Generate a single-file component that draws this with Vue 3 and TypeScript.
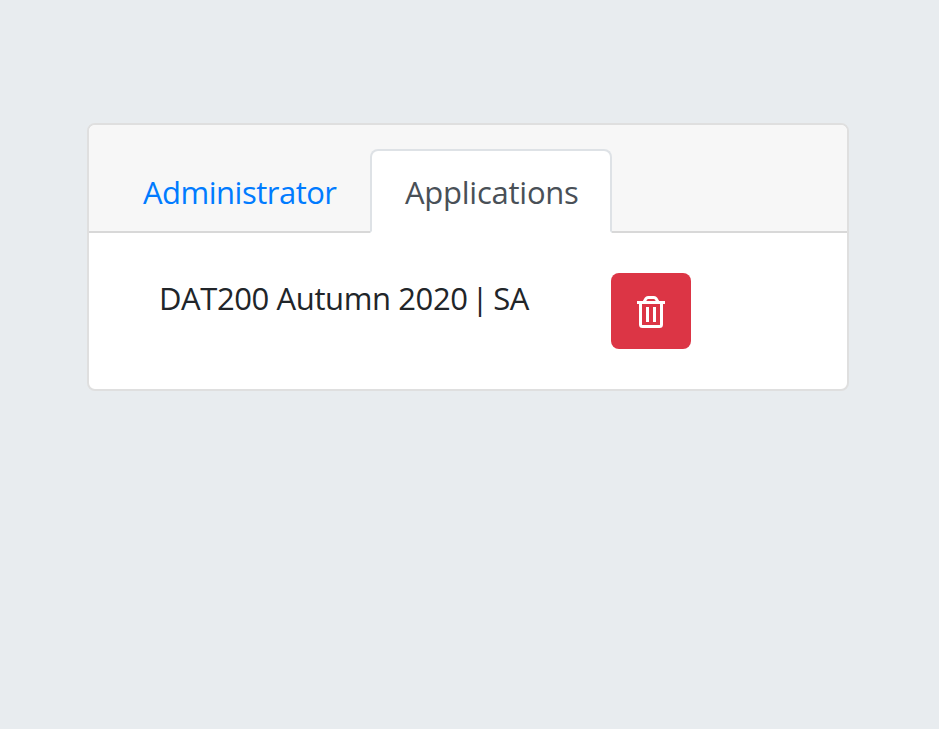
<script setup lang="ts">
import { ref } from 'vue'

type Tab = 'Administrator' | 'Applications'

interface Application {
  title: string
  code: string
}

const tabs: Tab[] = ['Administrator', 'Applications']
const active = ref<Tab>('Applications')
const applications: Application[] = [{ title: 'DAT200 Autumn 2020', code: 'SA' }]
</script>

<template>
  <main class="page">
    <section class="card">
      <header class="card-header">
        <nav class="tabs">
          <a
            v-for="tab in tabs"
            :key="tab"
            class="tab"
            :class="[tab.toLowerCase(), { active: tab === active }]"
            @click="active = tab"
          >{{ tab }}</a>
        </nav>
      </header>
      <div class="card-body">
        <div v-for="app in applications" :key="app.title" class="row">
          <div class="name">
            <span>{{ app.title }}</span>
            <span>|</span>
            <span class="code">{{ app.code }}</span>
          </div>
          <button class="delete" type="button" aria-label="Delete">
            <svg width="28" height="32" viewBox="0 0 28 32" fill="none" stroke="#fff" stroke-width="3">
              <path d="M0 6.5h28" />
              <path d="M7 6L9 2.6Q9.7 1.5 11 1.5H17Q18.3 1.5 19 2.6L21 6" />
              <path d="M3.5 7V28.5Q3.5 30.5 5.5 30.5H22.5Q24.5 30.5 24.5 28.5V7" />
              <path d="M10.5 11V26M17.5 11V26" />
            </svg>
          </button>
        </div>
      </div>
    </section>
  </main>
</template>

<style>
body {
  background: #e8ecef;
}
</style>

<style scoped>
.page {
  box-sizing: border-box;
  min-height: 729px;
  padding: 123px 90px 0 87px;
  font-family: "Open Sans", "Noto Sans", sans-serif;
  font-size: 31px;
  line-height: 48px;
  color: #212529;
}
.card {
  box-sizing: border-box;
  height: 268px;
  border: 2px solid #dfdfdf;
  border-radius: 8px;
  background: #fff;
}
.card-header {
  box-sizing: border-box;
  height: 108px;
  padding: 24px 20px 0;
  border-bottom: 2px solid #d8d8d8;
  border-radius: 6px 6px 0 0;
  background: #f7f7f7;
}
.tabs {
  display: flex;
}
.tab {
  box-sizing: border-box;
  height: 84px;
  padding: 17px 0 0 32px;
  border: 2px solid transparent;
  border-radius: 8px 8px 0 0;
  color: #007bff;
  white-space: nowrap;
  cursor: pointer;
}
.administrator {
  width: 261px;
  letter-spacing: -0.5px;
}
.applications {
  width: 242px;
  padding-left: 33px;
  letter-spacing: -0.25px;
}
.active {
  border-color: #dee2e6 #dee2e6 #fff;
  background: #fff;
  color: #495057;
}
.card-body {
  padding: 40px 0 0 70px;
}
.row {
  display: flex;
  align-items: flex-start;
}
.name {
  display: flex;
  gap: 4px;
  box-sizing: border-box;
  width: 452px;
  padding-top: 1px;
  letter-spacing: -0.4px;
  white-space: nowrap;
}
.code {
  padding-left: 1px;
}
.delete {
  display: flex;
  align-items: center;
  justify-content: center;
  width: 80px;
  height: 76px;
  padding: 2px 0 0;
  border: 0;
  border-radius: 8px;
  background: #dc3545;
  cursor: pointer;
}
</style>
